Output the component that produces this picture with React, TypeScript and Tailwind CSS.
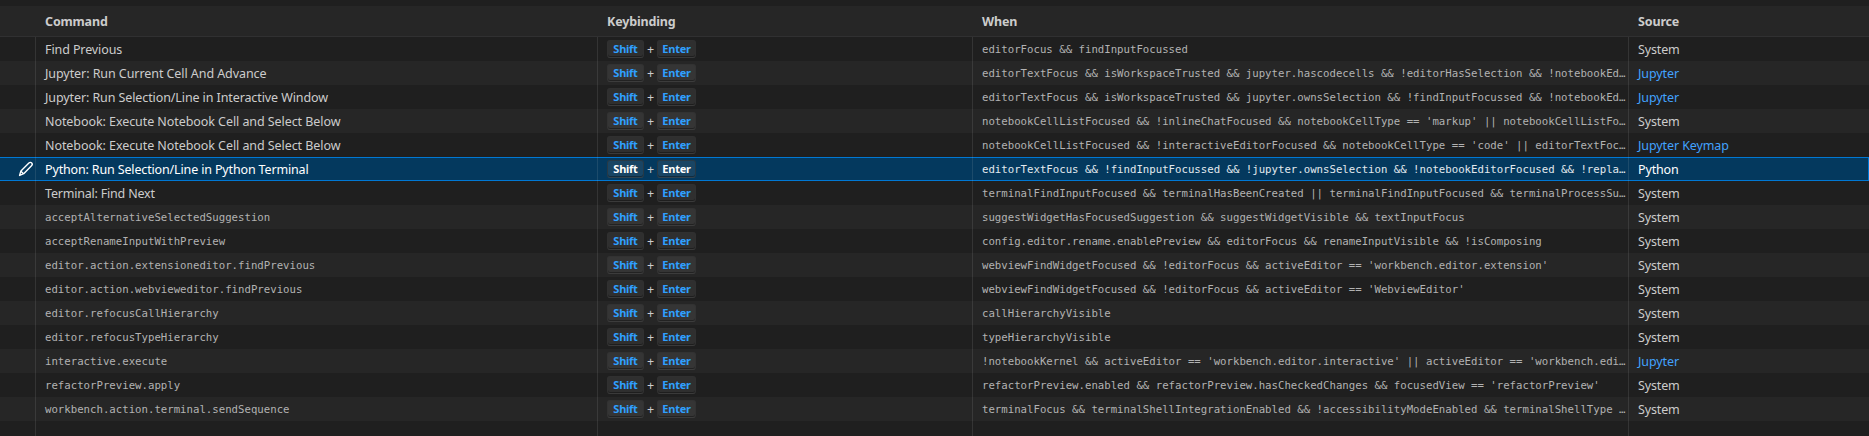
type Row = { command: string; id?: boolean; track?: string; when: string; source: string; link?: boolean };

const rows: Row[] = [
  { command: "Find Previous", track: "tracking-[-0.1px]", when: "editorFocus && findInputFocussed", source: "System" },
  { command: "Jupyter: Run Current Cell And Advance", track: "tracking-[-0.07px]", when: "editorTextFocus && isWorkspaceTrusted && jupyter.hascodecells && !editorHasSelection && !notebookEd…", source: "Jupyter", link: true },
  { command: "Jupyter: Run Selection/Line in Interactive Window", track: "tracking-[-0.1px]", when: "editorTextFocus && isWorkspaceTrusted && jupyter.ownsSelection && !findInputFocussed && !notebookEd…", source: "Jupyter", link: true },
  { command: "Notebook: Execute Notebook Cell and Select Below", track: "tracking-[-0.07px]", when: "notebookCellListFocused && !inlineChatFocused && notebookCellType == 'markup' || notebookCellListFo…", source: "System" },
  { command: "Notebook: Execute Notebook Cell and Select Below", track: "tracking-[-0.07px]", when: "notebookCellListFocused && !interactiveEditorFocused && notebookCellType == 'code' || editorTextFoc…", source: "Jupyter Keymap", link: true },
  { command: "Python: Run Selection/Line in Python Terminal", track: "tracking-[-0.15px]", when: "editorTextFocus && !findInputFocussed && !jupyter.ownsSelection && !notebookEditorFocused && !repla…", source: "Python" },
  { command: "Terminal: Find Next", track: "tracking-[-0.2px]", when: "terminalFindInputFocused && terminalHasBeenCreated || terminalFindInputFocused && terminalProcessSu…", source: "System" },
  { command: "acceptAlternativeSelectedSuggestion", id: true, when: "suggestWidgetHasFocusedSuggestion && suggestWidgetVisible && textInputFocus", source: "System" },
  { command: "acceptRenameInputWithPreview", id: true, when: "config.editor.rename.enablePreview && editorFocus && renameInputVisible && !isComposing", source: "System" },
  { command: "editor.action.extensioneditor.findPrevious", id: true, when: "webviewFindWidgetFocused && !editorFocus && activeEditor == 'workbench.editor.extension'", source: "System" },
  { command: "editor.action.webvieweditor.findPrevious", id: true, when: "webviewFindWidgetFocused && !editorFocus && activeEditor == 'WebviewEditor'", source: "System" },
  { command: "editor.refocusCallHierarchy", id: true, when: "callHierarchyVisible", source: "System" },
  { command: "editor.refocusTypeHierarchy", id: true, when: "typeHierarchyVisible", source: "System" },
  { command: "interactive.execute", id: true, when: "!notebookKernel && activeEditor == 'workbench.editor.interactive' || activeEditor == 'workbench.edi…", source: "Jupyter", link: true },
  { command: "refactorPreview.apply", id: true, when: "refactorPreview.enabled && refactorPreview.hasCheckedChanges && focusedView == 'refactorPreview'", source: "System" },
  { command: "workbench.action.terminal.sendSequence", id: true, when: "terminalFocus && terminalShellIntegrationEnabled && !accessibilityModeEnabled && terminalShellType …", source: "System" },
];

const SELECTED = 5;
const grid = "grid grid-cols-[36px_562px_375px_656px_1fr]";
const cell = "flex items-center pl-[9px] whitespace-nowrap overflow-hidden";
const line = "border-r border-[#cccccc]/12";
const mono = "font-['DejaVu_Sans_Mono',monospace] text-[10.69px]";

function Key({ label, width, selected }: { label: string; width: string; selected: boolean }) {
  return (
    <span
      className={`flex h-[18px] ${width} items-center justify-center rounded-[3px] border border-[#333333]/60 border-b-[#444444]/60 bg-[#808080]/17 pb-px text-[11px] font-bold tracking-[-0.25px] shadow-[inset_0_-1px_0_rgba(0,0,0,0.36)] ${selected ? "text-white" : "text-[#2fa0ff]"}`}
    >
      {label}
    </span>
  );
}

function Pencil() {
  return (
    <svg width="16" height="16" viewBox="0 0 16 16" fill="none" stroke="#ffffff" strokeWidth="1.4" strokeLinejoin="round">
      <path d="M1.6 14.4 2.9 10 10.9 2.1c.9-.9 2.1-.9 2.8-.2.7.7.7 1.9-.2 2.8L5.7 12.7Z" />
      <path d="M2.9 10.2 5.5 12.7" />
    </svg>
  );
}

export default function App() {
  return (
    <div className="flex h-[436px] w-full flex-col overflow-hidden bg-[#1f1f1f] pt-[6px] font-['Noto_Sans',sans-serif] text-[12.5px] leading-none text-[#cccccc]">
      <div className={`${grid} h-[31px] shrink-0 border-b border-[#303031] bg-[#262626] font-bold tracking-[-0.15px]`}>
        <div />
        <div className={`${cell} pt-0.5`}>Command</div>
        <div className={`${cell} pt-0.5`}>Keybinding</div>
        <div className={`${cell} pt-0.5`}>When</div>
        <div className={`${cell} pt-0.5`}>Source</div>
      </div>
      {rows.map((r, i) => {
        const sel = i === SELECTED;
        return (
          <div
            key={i}
            className={`${grid} h-6 shrink-0 ${sel ? "bg-[#04395e] text-white shadow-[inset_0_1px_0_#0078d4,inset_0_-1px_0_#0078d4,inset_-1px_0_0_#0078d4]" : i % 2 ? "bg-[#262626]" : ""}`}
          >
            <div className={`${line} flex items-center justify-end pr-px`}>{sel && <Pencil />}</div>
            <div className={`${cell} ${line} pt-0.5`}>
              <span className={r.id ? `${mono} text-[#b2b2b2]` : r.track}>{r.command}</span>
            </div>
            <div className={`${cell} ${line}`}>
              <Key label="Shift" width="w-[37px]" selected={sel} />
              <span className="w-[13px] pt-0.5 text-center text-[#cccccc]">+</span>
              <Key label="Enter" width="w-[39px]" selected={sel} />
            </div>
            <div className={`${cell} ${line} pt-0.5`}>
              <span className={`${mono} ${sel ? "text-[#e2e9ee]" : "text-[#b2b2b2]"}`}>{r.when}</span>
            </div>
            <div className={`${cell} pt-0.5`}>
              <span className={`${r.link ? "tracking-[-0.1px] text-[#42a2fd]" : "tracking-[-0.15px]"}`}>{r.source}</span>
            </div>
          </div>
        );
      })}
      <div className={`${grid} flex-1`}>
        <div className={line} />
        <div className={line} />
        <div className={line} />
        <div className={line} />
      </div>
    </div>
  );
}
